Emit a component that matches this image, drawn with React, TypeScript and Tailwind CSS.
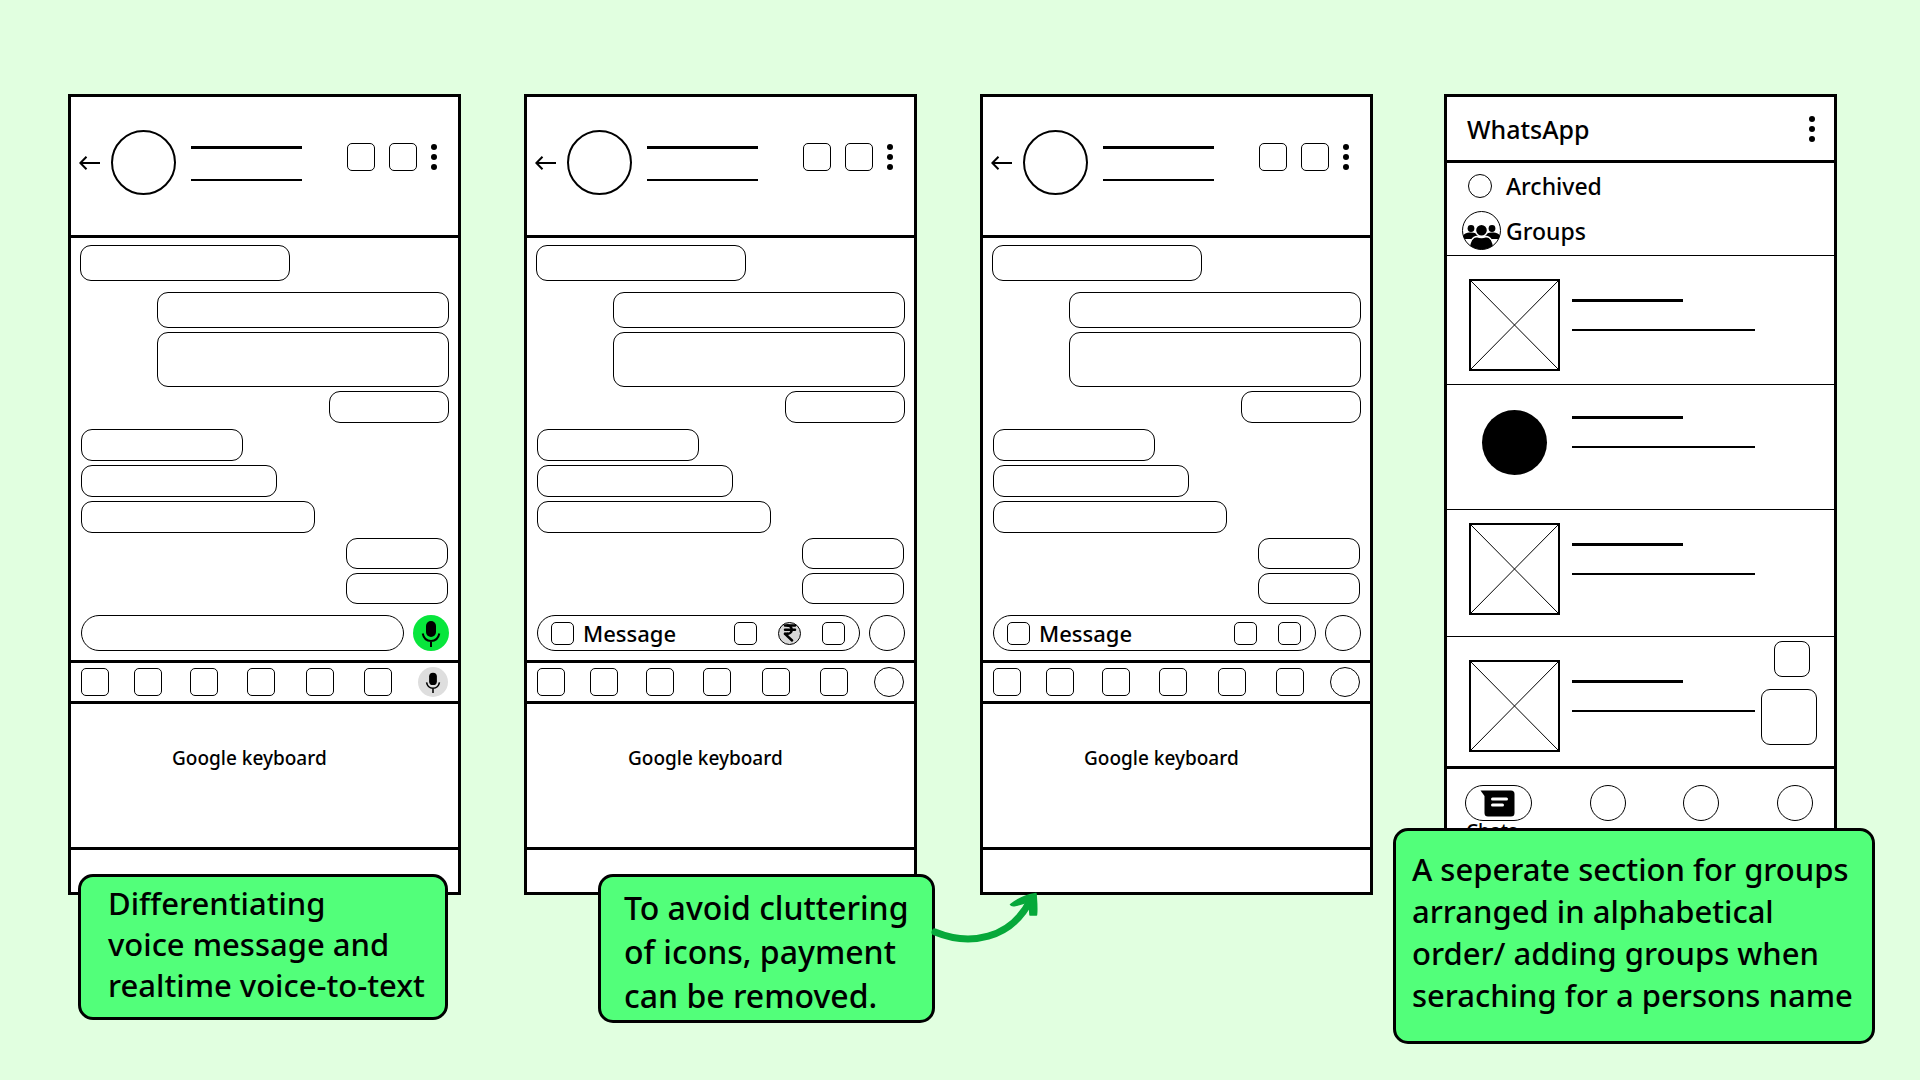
import React from "react";
import { IndianRupee } from "lucide-react";

type Variant = "voice" | "payment" | "clean";

interface PlaceholderProps {
  label: string;
  className?: string;
  children?: React.ReactNode;
}

const Square: React.FC<PlaceholderProps> = ({ label, className = "size-7 rounded-[5px]" }) => (
  <button aria-label={label} className={`block shrink-0 border border-black bg-white ${className}`} />
);

const Circle: React.FC<PlaceholderProps> = ({
  label,
  className = "size-9 border border-black bg-white",
  children,
}) => (
  <button aria-label={label} className={`flex shrink-0 items-center justify-center rounded-full ${className}`}>
    {children}
  </button>
);

const Dots = () => (
  <button aria-label="More options" className="flex flex-col gap-1">
    <span className="size-1.5 rounded-full bg-black" />
    <span className="size-1.5 rounded-full bg-black" />
    <span className="size-1.5 rounded-full bg-black" />
  </button>
);

const Mic: React.FC<{ className: string }> = ({ className }) => (
  <svg viewBox="0 0 36 36" className={className} fill="none" stroke="black" strokeWidth="2">
    <rect x="13" y="6" width="10" height="16" rx="5" fill="black" stroke="none" />
    <path d="M9.700 18.500c1 5 4.500 7.500 8.300 7.500s7.300-2.500 8.300-7.500M18 26v6" />
  </svg>
);

const BackArrow = () => (
  <svg viewBox="0 0 21 14" className="h-3.5 w-[21px]" fill="none" stroke="black" strokeWidth="2">
    <path d="M7.500 0.700 1.300 7l6.200 6.300M1 7h20" />
  </svg>
);

const GroupIcon = () => (
  <svg viewBox="0 0 39 39" className="size-[39px]">
    <clipPath id="group-clip">
      <circle cx="19.5" cy="19.5" r="19" />
    </clipPath>
    <g clipPath="url(#group-clip)">
      <circle cx="9" cy="17.5" r="3.4" />
      <circle cx="30" cy="17.5" r="3.4" />
      <path d="M0 28c0-5 4-6.500 9-6.500 4 0 6 1 7 3l-4 3.500z" />
      <path d="M39 28c0-5-4-6.500-9-6.500-4 0-6 1-7 3l4 3.500z" />
      <circle cx="19.5" cy="19.3" r="6" stroke="white" strokeWidth="1.4" />
      <path d="M7 40c0-10 4-14.500 8-14.500 3 1.300 6 1.300 9 0 4 0 8 4.500 8 14.500z" stroke="white" strokeWidth="1.4" />
    </g>
    <circle cx="19.5" cy="19.5" r="19" fill="none" stroke="black" />
  </svg>
);

const ChatIcon = () => (
  <svg viewBox="0 0 35 27" className="mr-0.5 h-[27px] w-[35px]">
    <path d="M0.500 0.500H31a3.500 3.500 0 0 1 3.500 3.500v19a3.500 3.500 0 0 1-3.500 3.500H8A3.500 3.500 0 0 1 4.500 23V6z" />
    <path d="M12.500 9h14M12.500 15h10" stroke="white" strokeWidth="3" strokeLinecap="round" />
  </svg>
);

const CurvedArrow = () => (
  <svg viewBox="0 0 120 70" className="absolute top-[7px] left-[328px] h-[70px] w-[120px]">
    <path d="M6 48C40 62 82 56 102 15" fill="none" stroke="#06a83a" strokeWidth="7" strokeLinecap="round" />
    <path
      d="M107 9.500C97 11 88 15.500 81.500 20.500c1 2 3 1.500 5 1 5-1 10-3.500 15-4-1 5-1 9-0.500 13.500h6.500c.8-7 0-14-.5-21.500z"
      fill="#06a83a"
      stroke="#06a83a"
      strokeWidth="1.5"
      strokeLinejoin="round"
    />
  </svg>
);

const BUBBLES = [
  { className: "items-start pb-[11px]", sizes: ["h-9 w-[210px]"] },
  { className: "items-end pb-1.5", sizes: ["h-9 w-[292px]", "h-[55px] w-[292px]", "h-8 w-[120px]"] },
  { className: "items-start pl-px pb-[5px]", sizes: ["h-8 w-[162px]", "h-8 w-[196px]", "h-8 w-[234px]"] },
  { className: "items-end pr-px pb-[11px]", sizes: ["h-[31px] w-[102px]", "h-[31px] w-[102px]"] },
];

const MessageBox: React.FC<{ variant: Variant }> = ({ variant }) => (
  <div className="flex h-9 min-w-0 flex-1 items-center rounded-full border border-black pr-3.5 pl-[13px]">
    {variant !== "voice" && <Square label="Emoji" className="size-[23px] rounded-[5px]" />}
    <input
      aria-label="Message"
      placeholder={variant === "voice" ? "" : "Message"}
      className="ml-[9px] h-7 min-w-0 flex-1 text-[22px] outline-none placeholder:text-black placeholder:opacity-100"
    />
    {variant !== "voice" && (
      <div className="flex items-center gap-[21px]">
        <Square label="Attach" className="size-[23px] rounded-[5px]" />
        {variant === "payment" && (
          <Circle label="Payment" className="size-[23px] border border-black bg-[#d9d9d9]">
            <IndianRupee size={20} strokeWidth={3} />
          </Circle>
        )}
        <Square label="Camera" className="size-[23px] rounded-[5px]" />
      </div>
    )}
  </div>
);

const ChatPhone: React.FC<{ variant: Variant }> = ({ variant }) => (
  <section className="border-[3px] border-black bg-white">
    <header className="flex h-[141px] items-start border-b-[3px] border-black pt-[33px] pr-[21px] pl-2">
      <div className="flex h-[65px] items-center">
        <button aria-label="Back">
          <BackArrow />
        </button>
        <div className="ml-[11px] size-[65px] rounded-full border-2 border-black" />
        <div className="ml-[15px] flex w-[111px] flex-col gap-[30px] pt-0.5">
          <div className="h-[3px] bg-black" />
          <div className="h-0.5 bg-black" />
        </div>
      </div>
      <div className="mt-[13px] ml-auto flex items-center gap-3.5">
        <Square label="Video call" />
        <Square label="Voice call" />
        <Dots />
      </div>
    </header>

    <div className="border-b-[3px] border-black px-[9px] pt-[7px] pb-[9px]">
      {BUBBLES.map((group, i) => (
        <div key={i} className={`flex flex-col gap-1 ${group.className}`}>
          {group.sizes.map((size, j) => (
            <div key={j} className={`rounded-[11px] border border-black ${size}`} />
          ))}
        </div>
      ))}
      <div className="flex items-center gap-[9px] pl-px">
        <MessageBox variant={variant} />
        {variant === "voice" ? (
          <Circle label="Record voice message" className="size-9 bg-[#08e63c]">
            <Mic className="size-9" />
          </Circle>
        ) : (
          <Circle label="Record voice message" />
        )}
      </div>
    </div>

    <div className="grid h-[41px] grid-cols-[53fr_56fr_57fr_59fr_58fr_54fr_30px] items-center border-b-[3px] border-black px-2.5">
      {["Menu", "Stickers", "GIF", "Clipboard", "Settings", "Theme"].map((label) => (
        <Square key={label} label={label} />
      ))}
      {variant === "voice" ? (
        <Circle label="Voice to text" className="size-[30px] bg-[#dedede]">
          <Mic className="size-7" />
        </Circle>
      ) : (
        <Circle label="Voice to text" className="size-[30px] border border-black bg-white" />
      )}
    </div>

    <div className="h-[146px] border-b-[3px] border-black pt-10 pl-[101px] text-[19px] leading-[28px]">
      Google keyboard
    </div>
    <div className="h-[42px]" />
  </section>
);

const CrossedImage = () => (
  <div className="h-[92px] w-[91px] shrink-0 border-2 border-black">
    <svg viewBox="0 0 87 88" className="block size-full" stroke="black">
      <path d="M0 0 87 88M87 0 0 88" />
    </svg>
  </div>
);

const ROWS = [
  { className: "h-[129px] pt-[23px] border-b", round: false, fabs: false },
  { className: "h-[125px] pt-[11px] border-b", round: true, fabs: false },
  { className: "h-[127px] pt-[13px] border-b", round: false, fabs: false },
  { className: "h-[132px] pt-[23px] border-b-[3px]", round: false, fabs: true },
];

const ListPhone = () => (
  <section className="border-[3px] border-black bg-white">
    <header className="flex h-[66px] items-center justify-between border-b-[3px] border-black pr-[19px] pl-5">
      <h1 className="text-[25px] leading-[30px]">WhatsApp</h1>
      <Dots />
    </header>

    <div className="flex flex-col gap-1.5 border-b border-black pt-[3px] pb-[5px] pl-[15px] text-[23px] leading-[30px]">
      <div className="flex h-[39px] items-center gap-[5px]">
        <div className="flex w-[39px] justify-center pr-1">
          <Circle label="Archived" className="size-6 border border-black" />
        </div>
        Archived
      </div>
      <div className="flex h-[39px] items-center gap-[5px]">
        <GroupIcon />
        Groups
      </div>
    </div>

    {ROWS.map((row, i) => (
      <div key={i} className={`flex items-start border-black pl-[22px] ${row.className}`}>
        {row.round ? (
          <div className="flex h-[92px] w-[91px] shrink-0 items-center justify-center">
            <div className="size-[65px] rounded-full bg-black" />
          </div>
        ) : (
          <CrossedImage />
        )}
        <div className="mt-5 ml-3 flex flex-col gap-[27px]">
          <div className="h-[3px] w-[111px] bg-black" />
          <div className="h-0.5 w-[183px] bg-black" />
        </div>
        {row.fabs && (
          <div className="-mt-[19px] mr-[17px] ml-auto flex flex-col items-end gap-3">
            <Square label="Assistant" className="mr-[7px] size-9 rounded-[8px]" />
            <Square label="New chat" className="size-14 rounded-[9px]" />
          </div>
        )}
      </div>
    ))}

    <nav className="flex h-[123px] items-start justify-between pt-4 pr-[21px] pl-[18px]">
      <div className="flex w-[67px] flex-col">
        <button aria-label="Chats" className="flex h-9 items-center justify-center rounded-full border border-black">
          <ChatIcon />
        </button>
        <span className="pl-px text-[19px] leading-5">Chats</span>
      </div>
      <Circle label="Updates" />
      <Circle label="Communities" />
      <Circle label="Calls" />
    </nav>
  </section>
);

interface NoteProps {
  lines: string[];
  className: string;
  children?: React.ReactNode;
}

const Note: React.FC<NoteProps> = ({ lines, className, children }) => (
  <div className={`relative rounded-[15px] border-[3px] border-black bg-[#52ff7a] whitespace-nowrap ${className}`}>
    {lines.map((line) => (
      <p key={line}>{line}</p>
    ))}
    {children}
  </div>
);

const App: React.FC = () => {
  return (
    <main className="flex min-h-screen items-start gap-[63px] bg-[#e1ffe0] pt-[94px] pr-[83px] pl-[68px] font-['Noto_Sans',sans-serif] font-medium text-black">
      <div className="flex min-w-0 flex-1 flex-col">
        <ChatPhone variant="voice" />
        <Note
          className="-mt-[21px] mr-[13px] ml-2.5 pt-1.5 pb-[11px] pl-[27px] text-[31px] leading-[41px]"
          lines={["Differentiating", "voice message and", "realtime voice-to-text"]}
        />
      </div>

      <div className="flex min-w-0 flex-1 flex-col">
        <ChatPhone variant="payment" />
        <Note
          className="-mt-[21px] -mr-[18px] ml-[74px] pt-[9px] pb-0.5 pl-[23px] text-[32px] leading-[44px]"
          lines={["To avoid cluttering", "of icons, payment", "can be removed."]}
        >
          <CurvedArrow />
        </Note>
      </div>

      <div className="flex min-w-0 flex-1 flex-col">
        <ChatPhone variant="clean" />
      </div>

      <div className="ml-2 flex min-w-0 flex-1 flex-col">
        <ListPhone />
        <Note
          className="-mt-[67px] -mr-[38px] -ml-[51px] pt-[17px] pb-[25px] pl-4 text-[31px] leading-[42px]"
          lines={[
            "A seperate section for groups",
            "arranged in alphabetical",
            "order/ adding groups when",
            "seraching for a persons name",
          ]}
        />
      </div>
    </main>
  );
};

export default App;
